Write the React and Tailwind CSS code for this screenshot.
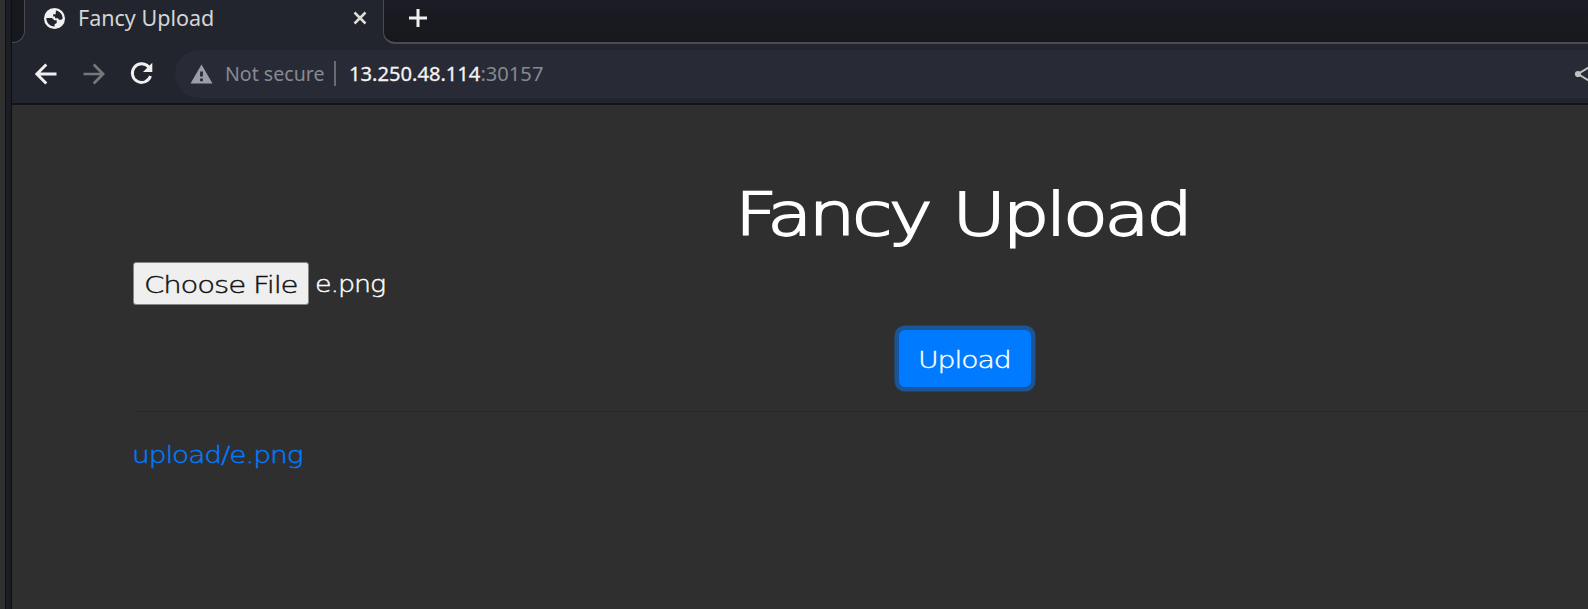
import React from 'react';

const wide = "inline-block origin-left whitespace-nowrap font-['DejaVu_Sans',sans-serif] font-extralight";
const small = "tracking-[-0.9px] [-webkit-text-stroke:0.4px_currentColor]";

function Tabs() {
  return (
    <div className="flex h-[44px] shrink-0 bg-[#22252e]">
      <div className="h-[44px] w-[14px] shrink-0 overflow-hidden">
        <div className="-ml-5 h-[43px] w-[33px] rounded-br-[12px] border-r border-b border-[#4a4c53] bg-[#17181d]" />
      </div>
      <div className="flex h-[36px] w-[357px] shrink-0 items-center pl-[17px] pr-[16px]">
        <svg width="23" height="23" viewBox="0 0 24 24" className="shrink-0">
          <circle cx="12" cy="12" r="11" fill="#f0f0f0" />
          <path d="M13.5 3.6c4 .7 7 4 7 8.3l-1.3 1.4h-2.4l-1.2-1.6h-3V9.8h-2V7.6h2.6z" fill="#22252e" />
          <path d="M3.5 11.5h5.8l2.6 2.2h2.4v3l-2.2 1.2v2.4c-4.8.2-8.6-3.8-8.6-8.8z" fill="#22252e" />
        </svg>
        <span className="ml-[12px] inline-block w-[140px] origin-left scale-x-[0.965] whitespace-nowrap font-['Noto_Sans',sans-serif] text-[22.3px] leading-[30px] text-[#d5d5d5]">Fancy Upload</span>
        <svg width="14" height="14" viewBox="0 0 14 14" className="ml-auto shrink-0" stroke="#dededb" strokeWidth="2.5">
          <path d="M1.5 1.5l11 11M12.5 1.5l-11 11" />
        </svg>
      </div>
      <div className="h-[44px] grow overflow-hidden">
        <div className="-mr-5 h-[44px] rounded-bl-[12px] border-b-2 border-l border-[#484b53] bg-linear-to-b from-[#1b1c25] to-[#17181b]">
          <svg width="18" height="18" viewBox="0 0 18 18" className="ml-[25px] translate-y-[9px]" stroke="#f0f0ee" strokeWidth="3">
            <path d="M9 0v18M0 9h18" />
          </svg>
        </div>
      </div>
    </div>
  );
}

function Toolbar() {
  return (
    <div className="flex h-[61px] shrink-0 items-center border-b-2 border-[#131419] bg-[#22252e] pl-[23px]">
      <svg width="22" height="22" viewBox="0 0 22 22" fill="none" stroke="#f0f0ee" strokeWidth="2.9" className="shrink-0">
        <path d="M21.5 11H2M11.3 1.5L1.9 11l9.4 9.5" />
      </svg>
      <svg width="22" height="22" viewBox="0 0 22 22" fill="none" stroke="#76777b" strokeWidth="2.7" className="ml-[26px] shrink-0">
        <path d="M.5 11H20M10.7 1.5L20.1 11l-9.4 9.5" />
      </svg>
      <svg width="23" height="23" viewBox="0 0 23 23" fill="none" className="ml-[25px] shrink-0">
        <path d="M18.7 5A9.3 9.3 0 1 0 20.5 14" stroke="#f0f0ee" strokeWidth="2.9" />
        <path d="M22.3 .8V10H13z" fill="#f0f0ee" />
      </svg>
      <div className="ml-[22px] flex h-[48px] grow items-center overflow-hidden rounded-l-full bg-[#282a35] pl-[15px] font-['Noto_Sans',sans-serif] text-[20.3px]">
        <svg width="23" height="20" viewBox="0 0 23 20" className="shrink-0">
          <path d="M11.5 .5L22.5 19.5H.5z" fill="#9b9ea7" />
          <path d="M10.1 7.5h2.8v5h-2.8zM10.1 14.5h2.8v2.7h-2.8z" fill="#282a35" />
        </svg>
        <span className="ml-[12px] w-[101px] shrink-0 origin-left scale-x-[0.965] whitespace-nowrap text-[#858b92]">Not secure</span>
        <span className="ml-[8px] h-[25px] w-[1.5px] shrink-0 bg-[#696b72]" />
        <span className="ml-[13px] origin-left scale-x-[0.993] whitespace-nowrap text-[#858990]">
          <span className="text-[#f4f4f4] [-webkit-text-stroke:0.3px_currentColor]">13.250.48.114</span>:30157
        </span>
        <svg width="14" height="22" viewBox="0 0 14 22" className="ml-auto shrink-0" stroke="#c0c0c0" strokeWidth="2">
          <path d="M17 3L4 11l13 8" fill="none" />
          <circle cx="4" cy="11" r="3.1" fill="#c0c0c0" stroke="none" />
        </svg>
      </div>
    </div>
  );
}

export default function App() {
  return (
    <div className="flex h-[609px] w-[1588px] overflow-hidden bg-[#2f2f2f]">
      <div className="w-[5px] shrink-0 bg-[#303030]" />
      <div className="w-[7px] shrink-0 border-x border-[#0e0f13] bg-[#1b1d25]" />
      <div className="flex min-w-0 grow flex-col">
        <Tabs />
        <Toolbar />
        <main className="grow overflow-hidden pl-[121px]">
          <div className="flex w-[1664px] flex-col">
            <h1 className="mt-[67px] flex h-[80px] justify-center text-[59px] leading-[80px] text-white">
              <span className="w-[460px]"><span className={`${wide} scale-x-[1.245] tracking-[-2.7px] [word-spacing:2.5px] [-webkit-text-stroke:1.8px_currentColor]`}>Fancy Upload</span></span>
            </h1>
            <div className="mt-[10px] flex h-[43px] items-center text-[23px]">
              <button className="h-[43px] w-[176px] shrink-0 rounded-[3px] border border-[#858585] bg-[#efefef] pl-[10px] text-left text-[#111]">
                <span className={`${wide} ${small} translate-y-px scale-x-[1.27]`}>Choose File</span>
              </button>
              <span className={`${wide} ${small} ml-[6px] translate-y-px scale-x-[1.17] text-white`}>e.png</span>
            </div>
            <div className="mt-[25px] flex justify-center">
              <button className="h-[57px] w-[132px] rounded-[6px] bg-[#007bff] pl-[19px] text-left text-[23px] text-white shadow-[0_0_0_4.5px_#1b5598]">
                <span className={`${wide} ${small} translate-y-px scale-x-[1.23]`}>Upload</span>
              </button>
            </div>
            <div className="mt-[24px] h-px bg-[#292929]" />
            <a className="mt-[24px] -ml-px text-[23px] leading-[36px] text-[#007bff]">
              <span className={`${wide} ${small} scale-x-[1.22]`}>upload/e.png</span>
            </a>
          </div>
        </main>
      </div>
    </div>
  );
}
